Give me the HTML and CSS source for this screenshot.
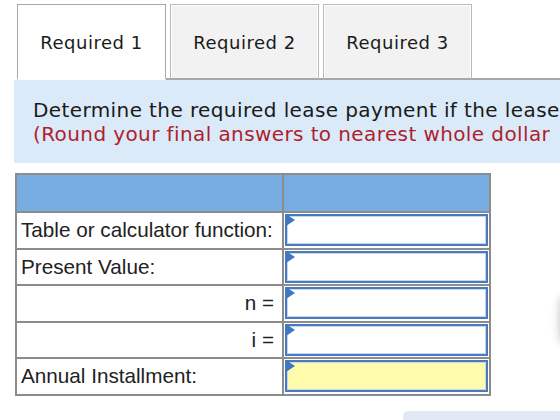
FILE: index.html
```html
<!DOCTYPE html>
<html lang="en">
<head>
    <meta charset="UTF-8">
    <meta name="viewport" content="width=device-width, initial-scale=1.0">
    <title>Required lease payment</title>
    <link rel="stylesheet" href="styles.css">
</head>
<body>
    <div class="page">
        <div class="tabs">
            <div class="tab active">Required 1</div>
            <div class="tab">Required 2</div>
            <div class="tab">Required 3</div>
            <div class="tab-fill"></div>
        </div>
        <div class="prompt">
            <p>Determine the required lease payment if the lease</p>
            <p class="note">(Round your final answers to nearest whole dollar</p>
        </div>

        <table class="answer-table">
            <tr class="head">
                <th></th>
                <th></th>
            </tr>
            <tr>
                <td>Table or calculator function:</td>
                <td class="cell"><div class="answer"></div></td>
            </tr>
            <tr>
                <td>Present Value:</td>
                <td class="cell"><div class="answer"></div></td>
            </tr>
            <tr>
                <td class="right">n =</td>
                <td class="cell"><div class="answer"></div></td>
            </tr>
            <tr>
                <td class="right">i =</td>
                <td class="cell"><div class="answer"></div></td>
            </tr>
            <tr>
                <td>Annual Installment:</td>
                <td class="cell"><div class="answer total"></div></td>
            </tr>
        </table>
    </div>
    <div class="side-shadow"></div>
    <div class="corner-box"></div>
</body>
</html>
```

FILE: styles.css
```css
body {
    margin: 0;
    font-family: "DejaVu Sans", Verdana, sans-serif;
    background: #fff;
    overflow: hidden;
}
.page {
    width: 560px;
    padding-top: 4px;
}
.tabs {
    display: flex;
    align-items: flex-end;
    margin-left: 17px;
    gap: 4px;
    height: 76px;
}
.tab {
    position: relative;
    box-sizing: border-box;
    width: 149px;
    height: 76px;
    display: flex;
    align-items: center;
    justify-content: center;
    padding-top: 2px;
    font-size: 18px;
    letter-spacing: 0.5px;
    color: #1a1a1a;
    background: #f2f2f2;
    border: 1px solid #b9b9b9;
    border-bottom: 2px solid #a8a8a8;
    box-shadow: inset 1px 1px 0 #fff, inset -1px 0 0 #fff;
}
.tab.active {
    background: #fff;
    border-color: #a8a8a8;
    border-bottom: 2px solid #fff;
    box-shadow: none;
}
.tab + .tab::before {
    content: "";
    position: absolute;
    left: -5px;
    bottom: -2px;
    width: 4px;
    border-bottom: 2px solid #a8a8a8;
}
.tab-fill {
    flex: 1;
    margin-left: -4px;
    border-bottom: 2px solid #a8a8a8;
}
.prompt {
    margin-left: 14px;
    background: #daeaf8;
    height: 83px;
    box-sizing: border-box;
    padding: 19px 0 0 19px;
    font-size: 20px;
    letter-spacing: 0.4px;
    line-height: 23.5px;
    white-space: nowrap;
    overflow: hidden;
    color: #1a1a1a;
}
.prompt p {
    margin: 0;
}
.prompt .note {
    color: #ae1f2d;
}
.answer-table {
    margin: 10px 0 0 15px;
    border-collapse: collapse;
    border: 2px solid #838383;
    font-family: "Liberation Sans", Arial, sans-serif;
    font-size: 20.7px;
    color: #222;
}
.answer-table th,
.answer-table td {
    border: 2px solid #8c8c8c;
    padding: 0 4px;
    height: 34.5px;
}
.answer-table td:first-child {
    width: 253px;
}
.answer-table .head th {
    background: #78ade3;
    height: 36px;
}
.answer-table td.right {
    text-align: right;
    padding-right: 8px;
}
.answer-table td.cell {
    width: 205px;
    padding: 0;
}
.answer {
    position: relative;
    box-sizing: border-box;
    height: 32px;
    margin: 0 1px;
    border: 2px solid #4a7abd;
    box-shadow: inset 0 0 0 1px #c6d6ec;
    background: #fff;
}
.answer::before {
    content: "";
    position: absolute;
    left: -1px;
    top: -2px;
    border-left: 9px solid #3e78c2;
    border-top: 6px solid transparent;
    border-bottom: 6px solid transparent;
}
.answer.total {
    background: #fefcab;
}
.side-shadow {
    position: fixed;
    right: -40px;
    top: 296px;
    width: 40px;
    height: 48px;
    border-radius: 8px;
    box-shadow: 0 0 10px rgba(0, 0, 0, 0.25);
}
.corner-box {
    position: fixed;
    left: 403px;
    top: 411px;
    width: 200px;
    height: 30px;
    border-radius: 5px 0 0 0;
    background: #e2e9f5;
}
```
